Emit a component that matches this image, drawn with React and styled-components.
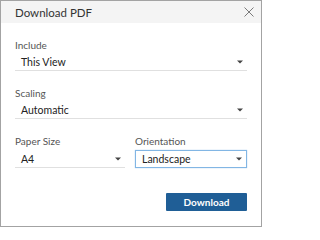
import React from 'react'
import styled, { createGlobalStyle } from 'styled-components';

const Global = createGlobalStyle`
    html, body {
        margin: 0;
        padding: 0;
        background: #ffffff;
    }
    * {
        box-sizing: border-box;
    }
`

const Dialog = styled.div`
    width: 262px;
    height: 227px;
    border: 1px solid #a3a3a3;
    background: #ffffff;
    font-family: Lato, "Open Sans", sans-serif;
    display: flex;
    flex-direction: column;
`

const Header = styled.div`
    height: 22px;
    background: #f4f4f4;
    padding: 0 7px 0 14px;
    display: flex;
    align-items: center;
    justify-content: space-between;
`

const Title = styled.span`
    font-size: 11.5px;
    color: #333333;
`

const Close = styled.button`
    width: 10px;
    height: 10px;
    padding: 0;
    border: 0;
    background: none;
    display: flex;
    align-items: center;
    justify-content: center;
`

const Body = styled.div`
    padding: 16px 14px 0 14px;
`

const Field = styled.div`
    display: flex;
    flex-direction: column;
    margin-bottom: ${p => p.$gap ?? 16}px;
    flex: ${p => p.$basis ? `0 0 ${p.$basis}px` : 1};
`

const Label = styled.label`
    font-size: 10px;
    line-height: 12px;
    color: #555555;
    margin-bottom: ${p => p.$gap ?? 2}px;
`

const Select = styled.div`
    height: 18px;
    display: flex;
    align-items: center;
    justify-content: space-between;
    padding: 0 4px 0 6px;
    font-size: 10.5px;
    color: #222222;
    border-bottom: 1px solid #e0e0e0;
    ${p => p.$focused && `
        border: 1px solid #82b6e4;
        box-shadow: 0 0 1px rgba(90, 160, 225, 0.6);
        padding: 0 4px 0 6px;
    `}
`

const Row = styled.div`
    display: flex;
    gap: 10px;
`

const Footer = styled.div`
    display: flex;
    justify-content: flex-end;
    margin-top: 25px;
`

const Button = styled.button`
    width: 81px;
    height: 18px;
    border: 0;
    border-radius: 1px;
    background: #1f5e96;
    color: #ffffff;
    font-family: Lato, "Open Sans", sans-serif;
    font-weight: 700;
    font-size: 10px;
    padding: 0;
`

const Arrow = () => (
    <svg width="6" height="4" viewBox="0 0 6 4">
        <path d="M0 0.5 L6 0.5 L3 3.5 Z" fill="#444444" />
    </svg>
)

const Dropdown = ({ value, focused }) => (
    <Select $focused={focused}>
        <span>{value}</span>
        <Arrow />
    </Select>
)

const App = () => {
    return (
        <>
            <Global />
            <Dialog>
                <Header>
                    <Title>Download PDF</Title>
                    <Close aria-label="Close">
                        <svg width="10" height="10" viewBox="0 0 10 10">
                            <path d="M0.5 0.5 L9.5 9.5 M9.5 0.5 L0.5 9.5" stroke="#7a7a7a" strokeWidth="1" />
                        </svg>
                    </Close>
                </Header>
                <Body>
                    <Field>
                        <Label>Include</Label>
                        <Dropdown value="This View" />
                    </Field>
                    <Field>
                        <Label>Scaling</Label>
                        <Dropdown value="Automatic" />
                    </Field>
                    <Row>
                        <Field $basis={110} $gap={0}>
                            <Label $gap={3}>Paper Size</Label>
                            <Dropdown value="A4" />
                        </Field>
                        <Field $gap={0}>
                            <Label $gap={3}>Orientation</Label>
                            <Dropdown value="Landscape" focused />
                        </Field>
                    </Row>
                    <Footer>
                        <Button>Download</Button>
                    </Footer>
                </Body>
            </Dialog>
        </>
    )
}

export default App;
